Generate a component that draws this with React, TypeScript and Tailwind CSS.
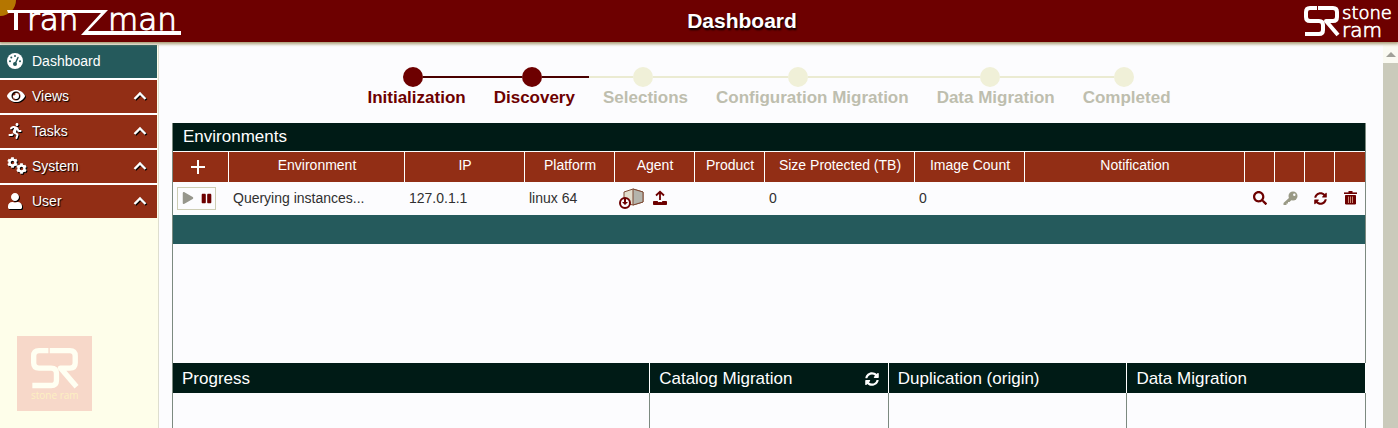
import type { ReactNode } from 'react'
import clsx from 'clsx'
import { FaCog, FaEye, FaPause, FaPlay, FaRunning, FaSearch, FaSyncAlt, FaUser } from 'react-icons/fa'

const menu = [
  { label: 'Dashboard', icon: <GaugeIcon />, active: true },
  { label: 'Views', icon: <FaEye size={18} />, active: false },
  { label: 'Tasks', icon: <FaRunning size={16} />, active: false },
  { label: 'System', icon: <GearsIcon />, active: false },
  { label: 'User', icon: <FaUser size={16} />, active: false },
]

const steps = [
  { label: 'Initialization', done: true },
  { label: 'Discovery', done: true },
  { label: 'Selections', done: false },
  { label: 'Configuration Migration', done: false },
  { label: 'Data Migration', done: false },
  { label: 'Completed', done: false },
]

const headings = ['Environment', 'IP', 'Platform', 'Agent', 'Product', 'Size Protected (TB)', 'Image Count', 'Notification', '', '', '', '']

function GaugeIcon() {
  return (
    <svg width="16" height="16" viewBox="0 0 16 16">
      <circle cx="8" cy="8" r="8" fill="white" />
      <g fill="#255a5c">
        <circle cx="8" cy="3" r="1" />
        <circle cx="4.3" cy="4.5" r="1" />
        <circle cx="3" cy="8.3" r="1" />
        <circle cx="13" cy="8.3" r="1" />
        <circle cx="8" cy="11" r="2" />
      </g>
      <path d="M8 11L11 4.5" stroke="#255a5c" strokeWidth="1.4" strokeLinecap="round" />
    </svg>
  )
}

function GearsIcon() {
  return (
    <span className="flex">
      <FaCog size={11} />
      <FaCog size={11} className="mt-1.5 -ml-0.5" />
    </span>
  )
}

function SrMark() {
  return (
    <g fill="none" stroke="currentColor" strokeWidth="4" strokeLinejoin="round">
      <path d="M13 2H6Q2 2 2 6V11Q2 15 6 15H15Q19 15 19 19V24Q19 28 15 28H1" />
      <path d="M14 2H29Q33 2 33 6V11Q33 15 29 15H22L34 29" />
    </g>
  )
}

function TranzmanLogo() {
  return (
    <svg width="184" height="42" viewBox="0 0 184 42" role="img" aria-label="TranZman" fill="white">
      <g fontFamily="DejaVu Sans, sans-serif" fontWeight="200" stroke="white" strokeWidth="1">
        <text x="27" y="30" fontSize="31">ran</text>
        <text x="108" y="30" fontSize="31">man</text>
      </g>
      <path d="M7 10H108L88 31H181V35H81L101 13H18V30H14V13H8Z" />
    </svg>
  )
}

function StoneRamLogo() {
  return (
    <svg width="94" height="42" viewBox="0 0 94 42" role="img" aria-label="stone ram" className="text-white">
      <g transform="translate(4 6)"><SrMark /></g>
      <g fontFamily="DejaVu Sans, sans-serif" fontWeight="200" fill="currentColor" stroke="currentColor" strokeWidth="0.7">
        <text x="42" y="19" fontSize="18">stone</text>
        <text x="42" y="37" fontSize="20">ram</text>
      </g>
    </svg>
  )
}

function ChevronUp() {
  return (
    <svg width="14" height="10" viewBox="0 0 14 10" fill="none" stroke="currentColor" strokeWidth="2.4">
      <path d="M1.5 8L7 2.5L12.5 8" />
    </svg>
  )
}

function AgentIcon() {
  return (
    <svg width="25" height="21" viewBox="0 0 25 21">
      <path d="M5 4L14 1L24 4V14L14 17L5 15Z" fill="#e2dccb" stroke="#7d4a34" />
      <path d="M14 1L24 4V14L14 17Z" fill="#b4b4ac" stroke="#7d4a34" />
      <circle cx="6" cy="15" r="5" fill="#fcfcfc" stroke="#6d0000" strokeWidth="2" />
      <path d="M5 11H7V14H9L6 17L3 14H5Z" fill="#6d0000" />
    </svg>
  )
}

function UploadIcon() {
  return (
    <svg width="16" height="16" viewBox="0 0 16 16" fill="none" stroke="#6d0000">
      <path d="M8 10V2M4 5.5L8 1.8L12 5.5" strokeWidth="1.8" />
      <path d="M1.5 11.5H5.5L6.5 12.5H9.5L10.5 11.5H14.5V14.5H1.5Z" fill="#6d0000" strokeLinejoin="round" />
    </svg>
  )
}

function KeyIcon() {
  return (
    <svg width="15" height="15" viewBox="0 0 15 15" fill="#999985">
      <path d="M7 6L9 8.5L6.5 11H5V12.5H3.5V14H0.5V12Z" />
      <circle cx="10" cy="5" r="4.5" />
      <circle cx="11.3" cy="3.7" r="1.2" fill="#fcfcfe" />
    </svg>
  )
}

function TrashIcon() {
  return (
    <svg width="13" height="14" viewBox="0 0 13 14" fill="none" stroke="currentColor">
      <path d="M4.5 1H8.5" strokeWidth="2" />
      <path d="M0 2.2H13" strokeWidth="1.6" />
      <path d="M1.5 4.5H11.5V13H1.5Z" fill="currentColor" strokeLinejoin="round" />
      <path d="M4.5 5.5V12M6.5 5.5V12M8.5 5.5V12" stroke="#c98a74" />
    </svg>
  )
}

function RowButton({ label, children }: { label: string; children: ReactNode }) {
  return (
    <button type="button" aria-label={label} className="flex w-full justify-center text-[#6d0000]">
      {children}
    </button>
  )
}

function Sidebar() {
  return (
    <aside className="flex w-[159px] shrink-0 flex-col border-r border-[#dedecf] bg-[#fefeea]">
      <nav className="mr-px flex flex-col gap-0.5 bg-white">
        {menu.map((item) => (
          <button
            key={item.label}
            type="button"
            className={clsx(
              'flex h-[33px] items-center pr-2.5 pb-0.5 pl-[7px] text-sm text-white',
              item.active ? 'bg-[#255a5c]' : 'bg-[#922e15] [text-shadow:1px_1px_1px_black]',
            )}
          >
            <span className={clsx('flex w-[25px] items-center', !item.active && 'drop-shadow-[1px_1px_0px_black]')}>{item.icon}</span>
            {item.label}
            {!item.active && <span className="ml-auto drop-shadow-[1px_1px_0px_black]"><ChevronUp /></span>}
          </button>
        ))}
      </nav>
      <svg width="75" height="75" viewBox="0 0 75 75" role="img" aria-label="stone ram" className="mt-auto mb-[17px] ml-[17px] shrink-0 bg-[#f7d8c9] text-[#fffff2]">
        <g transform="translate(14 12) scale(1.34)"><SrMark /></g>
        <text x="14" y="63" fontSize="10" fontFamily="Open Sans, sans-serif" fill="#fdf0c2">stone ram</text>
      </svg>
    </aside>
  )
}

function Stepper() {
  return (
    <ol className="flex justify-center text-[17px] leading-5 font-bold">
      {steps.map((step, i) => {
        const line = step.done ? 'bg-[#4a0000]' : 'bg-[#ebebd2]'
        return (
          <li key={step.label} className={step.done ? 'text-[#6d0000]' : 'text-[#bebeae]'}>
            <div className="flex items-center">
              <span className={clsx('h-0.5 w-[39%]', i > 0 && line)} />
              <span className={clsx('size-5 rounded-full', step.done ? 'bg-[#6d0000]' : 'bg-[#f0f0d8]')} />
              <span className={clsx('h-0.5 flex-1', i < steps.length - 1 && line)} />
            </div>
            <div className="px-3.5 pt-px">{step.label}</div>
          </li>
        )
      })}
    </ol>
  )
}

function Environments() {
  return (
    <section className="mt-[15px] border-x border-[#7c8a80]">
      <h2 className="h-7 bg-[#001b16] pl-2.5 text-[17px] leading-7 text-white">Environments</h2>
      <table className="mt-px w-full table-fixed border-collapse text-sm">
        <colgroup>
          <col className="w-[56px]" />
          <col className="w-[176px]" />
          <col className="w-[120px]" />
          <col className="w-[90px]" />
          <col className="w-[80px]" />
          <col className="w-[70px]" />
          <col className="w-[150px]" />
          <col className="w-[110px]" />
          <col />
          <col className="w-[30px]" />
          <col className="w-[30px]" />
          <col className="w-[30px]" />
          <col className="w-[30px]" />
        </colgroup>
        <thead>
          <tr className="h-[30px] bg-[#922e15] text-white">
            <th className="p-0 shadow-[inset_-1px_0_white]">
              <button type="button" aria-label="Add environment" className="flex w-full justify-center pr-1.5">
                <svg width="14" height="14" viewBox="0 0 14 14" stroke="currentColor" strokeWidth="2">
                  <path d="M7 0V14M0 7H14" />
                </svg>
              </button>
            </th>
            {headings.map((h, i) => (
              <th key={i} className="p-0 pb-1 font-normal whitespace-nowrap shadow-[inset_-1px_0_white] last:shadow-none">{h}</th>
            ))}
          </tr>
        </thead>
        <tbody className="text-[#303030]">
          <tr className="h-[33px] [&>td]:p-0 [&>td]:pb-px [&>td]:whitespace-nowrap">
            <td>
              <div className="ml-1 flex h-[23px] w-[39px] items-center justify-between border border-[#cdcdb4] pr-[3px] pl-1">
                <button type="button" aria-label="Start" className="text-[#96968c]"><FaPlay size={12} /></button>
                <button type="button" aria-label="Pause" className="text-[#6d0000]"><FaPause size={11} /></button>
              </div>
            </td>
            <td><span className="pl-1">Querying instances...</span></td>
            <td><span className="pl-1">127.0.1.1</span></td>
            <td><span className="pl-1">linux 64</span></td>
            <td>
              <div className="flex items-center gap-2 pl-1">
                <AgentIcon />
                <button type="button" aria-label="Upload agent"><UploadIcon /></button>
              </div>
            </td>
            <td />
            <td><span className="pl-1">0</span></td>
            <td><span className="pl-1">0</span></td>
            <td />
            <td><RowButton label="Search"><FaSearch size={14} /></RowButton></td>
            <td><RowButton label="Credentials"><KeyIcon /></RowButton></td>
            <td><RowButton label="Refresh"><FaSyncAlt size={13} /></RowButton></td>
            <td><RowButton label="Delete"><TrashIcon /></RowButton></td>
          </tr>
        </tbody>
      </table>
      <div className="h-[29px] bg-[#255a5c]" />
      <div className="h-[119px]" />
    </section>
  )
}

function ProgressColumn({ title, action }: { title: string; action?: ReactNode }) {
  return (
    <section className="flex flex-col border-r border-[#7c8a80]">
      <h2 className="-mr-px flex h-[30px] items-center justify-between border-r border-white bg-[#001b16] px-[9px] pt-0.5 text-[17px] text-white">
        {title}
        {action}
      </h2>
    </section>
  )
}

export default function App() {
  return (
    <div className="flex h-screen flex-col overflow-hidden bg-[#fcfcfe] font-['Liberation_Sans',Arial,sans-serif]">
      <header className="relative z-10 grid h-[42px] shrink-0 grid-cols-[1fr_auto_1fr] items-center bg-[#6d0000] shadow-[0_1px_3px_1px_#a79a70]">
        <span className="absolute top-0 left-0 size-4 rounded-br-full bg-[#b57600]" />
        <a href="#" className="relative"><TranzmanLogo /></a>
        <h1 className="pl-[86px] text-[21px] font-bold text-white [text-shadow:1px_2px_2px_black]">Dashboard</h1>
        <a href="#" className="ml-auto pr-1"><StoneRamLogo /></a>
      </header>
      <div className="flex min-h-0 flex-1 pt-[3px]">
        <Sidebar />
        <main className="flex min-w-0 flex-1 flex-col pt-[22px] pr-[17px] pl-[13px]">
          <Stepper />
          <Environments />
          <div className="grid flex-1 grid-cols-[2fr_1fr_1fr_1fr] border-l border-[#7c8a80]">
            <ProgressColumn title="Progress" />
            <ProgressColumn
              title="Catalog Migration"
              action={<button type="button" aria-label="Refresh catalog"><FaSyncAlt size={14} /></button>}
            />
            <ProgressColumn title="Duplication (origin)" />
            <ProgressColumn title="Data Migration" />
          </div>
        </main>
        <div className="flex w-[15px] shrink-0 flex-col items-center bg-[#cacabb]">
          <div className="flex h-[18px] w-full items-center justify-center bg-[#fafaf2]">
            <svg width="10" height="5" viewBox="0 0 10 5" fill="#a0a098"><path d="M5 0L10 5H0Z" /></svg>
          </div>
        </div>
      </div>
    </div>
  )
}
